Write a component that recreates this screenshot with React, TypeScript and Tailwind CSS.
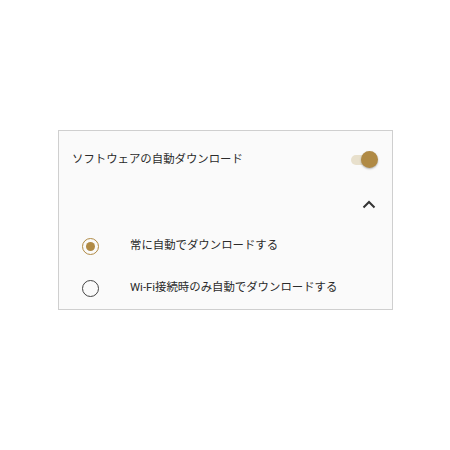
import { useState } from 'react'

function App() {
  const [enabled, setEnabled] = useState(true)
  const [choice, setChoice] = useState<'always' | 'wifi'>('always')

  const options: { key: 'always' | 'wifi'; label: string }[] = [
    { key: 'always', label: '常に自動でダウンロードする' },
    { key: 'wifi', label: 'Wi-Fi接続時のみ自動でダウンロードする' },
  ]

  return (
    <div
      className="w-[450px] h-[450px] bg-white pt-[130px] pl-[58px]"
      style={{ fontFamily: 'Roboto, "Noto Sans CJK JP", sans-serif' }}
    >
      <div className="w-[335px] h-[180px] bg-[#fafafa] border border-[#cfcfcf] text-[#2b2b2b] text-[11.4px]">
        <div className="flex items-center justify-between h-[58px] pl-[13px] pr-[14px]">
          <span>ソフトウェアの自動ダウンロード</span>
          <button
            onClick={() => setEnabled(!enabled)}
            className="relative w-[27px] h-[17px] flex items-center -mt-[1px]"
          >
            <span className="block w-[25px] h-[10px] rounded-full bg-[#e8e0cc]" />
            <span className="absolute right-0 top-0 w-[17px] h-[17px] rounded-full bg-[#b08a45] shadow-[0_1px_2px_rgba(0,0,0,0.3)]" />
          </button>
        </div>
        <div className="flex justify-end h-[30px] pr-[16px] pt-[6px]">
          <svg width="14" height="10" viewBox="0 0 14 10" className="mt-[4px]">
            <path d="M1.5 8.5 L7 3 L12.5 8.5" fill="none" stroke="#333" strokeWidth="2" />
          </svg>
        </div>
        <div className="flex flex-col pt-[6px]">
          {options.map((o) => (
            <button
              key={o.key}
              onClick={() => setChoice(o.key)}
              className="flex items-center h-[42px] pl-[23px] text-left"
            >
              <span
                className={
                  'flex items-center justify-center w-[17px] h-[17px] rounded-full border-[1.5px] ' +
                  (choice === o.key ? 'border-[#b08a45]' : 'border-[#444]')
                }
              >
                {choice === o.key && <span className="w-[9px] h-[9px] rounded-full bg-[#b08a45]" />}
              </span>
              <span className="ml-[31px]">{o.label}</span>
            </button>
          ))}
        </div>
      </div>
    </div>
  )
}

export default App
